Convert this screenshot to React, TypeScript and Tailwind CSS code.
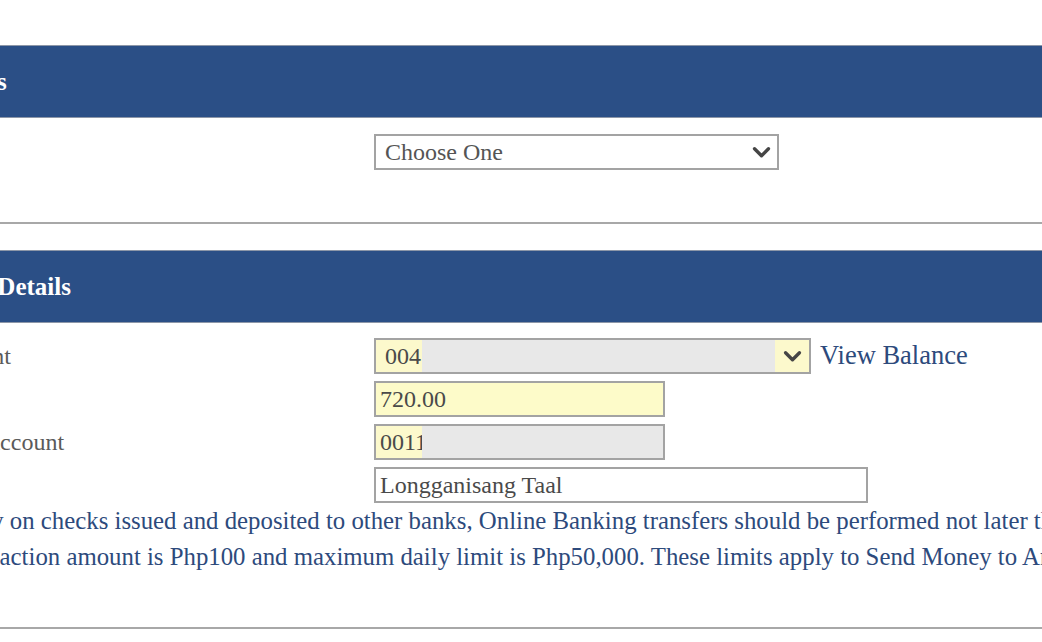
const serif = "font-['Liberation_Serif',serif]";

// Chevron like the browser's select arrow
const Chevron = () => (
  <svg viewBox="0 0 20 14" className="h-[13px] w-[19px]" fill="none">
    <path d="M2.5 3l7.5 7.5L17.5 3" stroke="#454545" strokeWidth={3.6} strokeLinecap="round" strokeLinejoin="round" />
  </svg>
);

const SectionHeader = ({ title, offset }: { title: string; offset: string }) => (
  <div className="h-[73px] flex items-center bg-[#2b4f86] border-y border-[#8d97a8] overflow-hidden">
    <span className={`whitespace-nowrap text-[25px] font-bold text-white ${offset}`}>{title}</span>
  </div>
);

const Label = ({ text }: { text: string }) => (
  <div className="w-[374px] shrink-0 overflow-hidden">
    <span className="block whitespace-nowrap -ml-[127px] text-[24px] leading-[36px] text-[#5a5a5a]">{text}</span>
  </div>
);

export default function App() {
  return (
    <div className={`${serif} w-[1042px] h-[642px] overflow-hidden bg-white`}>
      <div className="h-[45px]" />

      <SectionHeader title="Accounts" offset="-ml-[92px]" />
      <div className="flex pt-[16px] h-[104px]">
        <div className="w-[374px] shrink-0" />
        <div className="w-[405px] h-[36px] flex items-center justify-between border-2 border-[#a3a3a3] bg-white pl-[9px] pr-[6px]">
          <span className="text-[24px] text-[#555]">Choose One</span>
          <Chevron />
        </div>
      </div>
      <div className="h-[2px] bg-[#a8a8a8]" />
      <div className="h-[26px]" />

      <SectionHeader title="Transfer Details" offset="-ml-[101px]" />
      <div className="flex flex-col gap-[7px] pt-[15px]">
        <div className="flex items-center h-[36px]">
          <Label text="From Account" />
          <div className="w-[437px] h-[36px] flex items-stretch border-2 border-[#a3a3a3] bg-[#fcf9cc]">
            <span className="pl-[9px] w-[46px] text-[24px] leading-[32px] text-[#4a4a4a] overflow-hidden">004</span>
            <div className="flex-1 bg-[#e8e8e8]" />
            <div className="w-[34px] flex items-center justify-center">
              <Chevron />
            </div>
          </div>
          <span className="ml-[9px] text-[26.5px] text-[#2d4a7c]">View Balance</span>
        </div>

        <div className="flex items-center h-[36px]">
          <Label text="Amount" />
          <div className="w-[291px] h-[36px] flex items-center border-2 border-[#a3a3a3] bg-[#fdfbc9] pl-[4px]">
            <span className="text-[24px] text-[#4a4a4a]">720.00</span>
          </div>
        </div>

        <div className="flex items-center h-[36px]">
          <Label text="Transfer to Account" />
          <div className="w-[291px] h-[36px] flex items-stretch border-2 border-[#a3a3a3] bg-[#fcf9cc]">
            <span className="pl-[4px] w-[46px] whitespace-nowrap text-[24px] leading-[32px] text-[#4a4a4a] overflow-hidden">00110</span>
            <div className="flex-1 bg-[#e8e8e8]" />
          </div>
        </div>

        <div className="flex items-center h-[36px]">
          <Label text="Remarks" />
          <div className="w-[494px] h-[36px] flex items-center border-2 border-[#a3a3a3] bg-white pl-[4px]">
            <span className="text-[24px] text-[#4a4a4a]">Longganisang Taal</span>
          </div>
        </div>
      </div>

      <div className="text-[24.8px] leading-[36px] text-[#2d4a7c] whitespace-nowrap">
        <p className="-ml-[228px]">
          Note: This applies only on checks issued and deposited to other banks, Online Banking transfers should be performed not later than 3:00 PM.
        </p>
        <p className="-ml-[154px]">
          Minimum transaction amount is Php100 and maximum daily limit is Php50,000. These limits apply to Send Money to Any Bank transactions.
        </p>
      </div>
      <div className="h-[52px]" />
      <div className="h-[2px] bg-[#a8a8a8]" />
    </div>
  );
}
